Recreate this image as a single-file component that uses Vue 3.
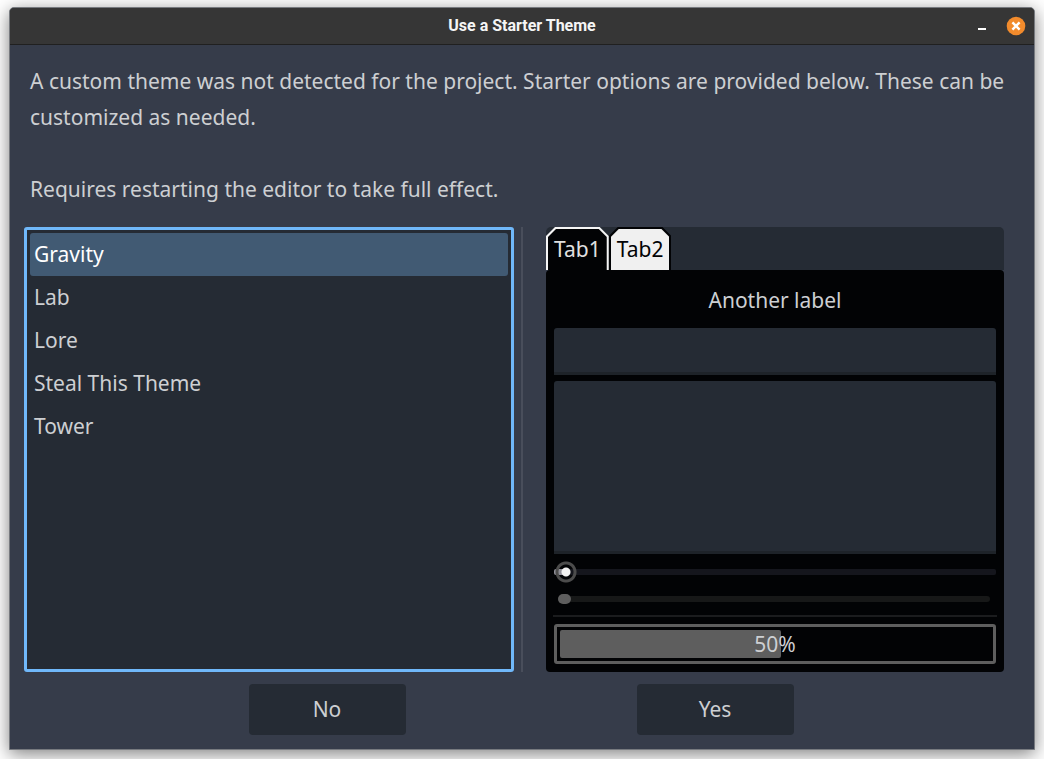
<script setup>
import { ref } from 'vue'

const themes = ['Gravity', 'Lab', 'Lore', 'Steal This Theme', 'Tower']
const selected = ref('Gravity')
const tabs = ['Tab1', 'Tab2']
const activeTab = ref('Tab1')
const name = ref('')
const notes = ref('')
const volume = ref(0)
const scroll = ref(0)
const progress = ref(50)
</script>

<template>
  <div class="desktop">
    <section class="window" role="dialog" aria-labelledby="dialog-title">
      <header class="titlebar">
        <h1 id="dialog-title" class="title">Use a Starter Theme</h1>
        <div class="window-controls">
          <button class="control" type="button" aria-label="Minimize">
            <svg width="20" height="20" viewBox="0 0 20 20" aria-hidden="true">
              <rect x="6" y="12" width="8" height="2" fill="#fff" />
            </svg>
          </button>
          <button class="control" type="button" aria-label="Close">
            <svg width="20" height="20" viewBox="0 0 20 20" aria-hidden="true">
              <circle cx="10" cy="10" r="9.3" fill="#f28b2c" />
              <path d="M6.4 6.4l7.2 7.2M13.6 6.4l-7.2 7.2" stroke="#fff" stroke-width="2.4" />
            </svg>
          </button>
        </div>
      </header>

      <div class="body">
        <div class="message">
          <p>
            A custom theme was not detected for the project. Starter options are provided below.
            These can be customized as needed.
          </p>
          <p>Requires restarting the editor to take full effect.</p>
        </div>

        <div class="split">
          <ul class="themes" aria-label="Themes">
            <li v-for="theme in themes" :key="theme">
              <button
                type="button"
                class="theme"
                :class="{ selected: theme === selected }"
                :aria-pressed="theme === selected"
                @click="selected = theme"
              >{{ theme }}</button>
            </li>
          </ul>

          <div class="divider"></div>

          <div class="preview">
            <div class="tabs" role="tablist">
              <button
                v-for="tab in tabs"
                :key="tab"
                type="button"
                role="tab"
                class="tab"
                :class="{ active: tab === activeTab }"
                :aria-selected="tab === activeTab"
                @click="activeTab = tab"
              ><span>{{ tab }}</span></button>
            </div>
            <div class="panel" role="tabpanel">
              <label class="panel-label" for="sample-line">Another label</label>
              <input id="sample-line" v-model="name" class="field line" type="text" />
              <textarea v-model="notes" class="field area" aria-label="Sample text"></textarea>
              <input v-model="volume" class="slider" type="range" aria-label="Sample slider" />
              <input v-model="scroll" class="scroller" type="range" aria-label="Sample scroll bar" />
              <hr class="rule" />
              <div
                class="progress"
                role="progressbar"
                aria-label="Sample progress"
                :aria-valuenow="progress"
                aria-valuemin="0"
                aria-valuemax="100"
              >
                <div class="fill" :style="{ width: progress + '%' }"></div>
                <span class="percent">{{ progress }}%</span>
              </div>
            </div>
          </div>
        </div>

        <footer class="actions">
          <button type="button" class="action">No</button>
          <button type="button" class="action">Yes</button>
        </footer>
      </div>
    </section>
  </div>
</template>

<style>
body {
  margin: 0;
  background: #fff;
}
</style>

<style scoped>
* {
  box-sizing: border-box;
}

.desktop {
  display: flex;
  min-height: 100vh;
  padding: 7px 9px 9px;
  overflow: hidden;
  font-family: "Noto Sans", sans-serif;
  font-size: 21px;
  color: #cdcfd2;
}

button,
input,
textarea {
  margin: 0;
  padding: 0;
  border: 0;
  font: inherit;
  color: inherit;
  background: none;
}

.window {
  flex: 1;
  display: flex;
  flex-direction: column;
  border: 1px solid #777a7f;
  border-radius: 5px 5px 0 0;
  background: #363c4a;
  box-shadow: 0 4px 18px rgba(0, 0, 0, 0.5);
}

.titlebar {
  display: grid;
  grid-template-columns: 1fr auto 1fr;
  align-items: center;
  height: 37px;
  padding: 0 8px;
  border-bottom: 1px solid #202020;
  border-radius: 4px 4px 0 0;
  background: #363636;
}

.title {
  grid-column: 2;
  margin: 0;
  font-family: Roboto, sans-serif;
  font-size: 16px;
  line-height: 24px;
  font-weight: 700;
  color: #f5f5f5;
}

.window-controls {
  display: flex;
  justify-content: flex-end;
  gap: 14px;
}

.control {
  width: 20px;
  height: 20px;
}

.control svg {
  display: block;
}

.body {
  flex: 1;
  display: flex;
  flex-direction: column;
  padding: 18px 30px 14px 14px;
}

.message {
  display: grid;
  gap: 36px;
  margin-right: -10px;
  padding-left: 6px;
  line-height: 36px;
}

.message p {
  margin: 0;
}

.split {
  flex: 1;
  display: grid;
  grid-template-columns: 490fr 32px 458fr;
  margin-top: 20px;
}

.themes {
  margin: 0;
  padding: 3px;
  list-style: none;
  border: 3px solid #70b8fa;
  border-radius: 3px;
  background: #252b34;
}

.theme {
  display: block;
  width: 100%;
  height: 43px;
  padding: 0 4px 2px;
  border-radius: 3px;
  text-align: left;
}

.theme.selected {
  background: #415a73;
  color: #fff;
}

.divider {
  width: 2px;
  margin-left: 7px;
  background: #494e5b;
}

.preview {
  display: flex;
  flex-direction: column;
}

.tabs {
  display: flex;
  height: 43px;
  border-radius: 5px 5px 0 0;
  background: #252b34;
}

.tab {
  display: grid;
  background: #020305;
  color: #020305;
  clip-path: polygon(0 9px, 9px 0, calc(100% - 9px) 0, 100% 9px, 100% 100%, 0 100%);
}

.tab span {
  margin: 2px 2px 0;
  padding: 0 6px;
  line-height: 41px;
  background: #f0f0f0;
  clip-path: polygon(0 8px, 8px 0, calc(100% - 8px) 0, 100% 8px, 100% 100%, 0 100%);
}

.tab.active {
  background: #f5f5f5;
  color: #e0e0e0;
}

.tab.active span {
  background: #020305;
}

.panel {
  flex: 1;
  display: flex;
  flex-direction: column;
  padding: 12px 8px 8px;
  border-radius: 4px;
  background: #020305;
}

.panel-label {
  line-height: 36px;
  text-align: center;
}

.field {
  width: 100%;
  padding: 4px 8px;
  border-bottom: 3px solid #1e2329;
  border-radius: 3px 3px 0 0;
  background: #252b34;
}

.line {
  height: 47px;
  margin-top: 10px;
}

.area {
  flex: 1;
  min-height: 80px;
  margin-top: 6px;
  resize: none;
}

.slider,
.scroller {
  appearance: none;
  display: block;
}

.slider {
  height: 24px;
  margin-top: 6px;
}

.slider::-webkit-slider-runnable-track {
  height: 6px;
  border-radius: 2px;
  background: linear-gradient(90deg, #8f8f98 12px, #15161d 12px);
}

.slider::-webkit-slider-thumb {
  appearance: none;
  width: 24px;
  height: 24px;
  margin-top: -9px;
  background: radial-gradient(circle, #f2f2f2 4px, transparent 5px, transparent 7px, #4c4c4c 8px, #4c4c4c 10px, transparent 11px);
}

.scroller {
  height: 10px;
  margin: 10px 6px 0 4px;
}

.scroller::-webkit-slider-runnable-track {
  height: 6px;
  border-radius: 3px;
  background: #171818;
}

.scroller::-webkit-slider-thumb {
  appearance: none;
  width: 13px;
  height: 10px;
  margin-top: -2px;
  border-radius: 5px;
  background: #5e5e5e;
}

.rule {
  height: 2px;
  margin: 11px -1px 7px;
  border: 0;
  background: #1b1c1e;
}

.progress {
  position: relative;
  height: 40px;
  padding: 3px;
  border: 3px solid #5e5e5e;
  border-radius: 3px;
}

.fill {
  box-sizing: content-box;
  height: 100%;
  padding-right: 6px;
  border-radius: 2px;
  background: #5e5e5e;
}

.percent {
  position: absolute;
  inset: 0;
  line-height: 34px;
  text-align: center;
}

.actions {
  display: flex;
  justify-content: center;
  gap: 231px;
  margin: 12px -14px 0 0;
}

.action {
  width: 157px;
  height: 51px;
  padding-bottom: 2px;
  border-radius: 4px;
  background: #252b34;
}
</style>
